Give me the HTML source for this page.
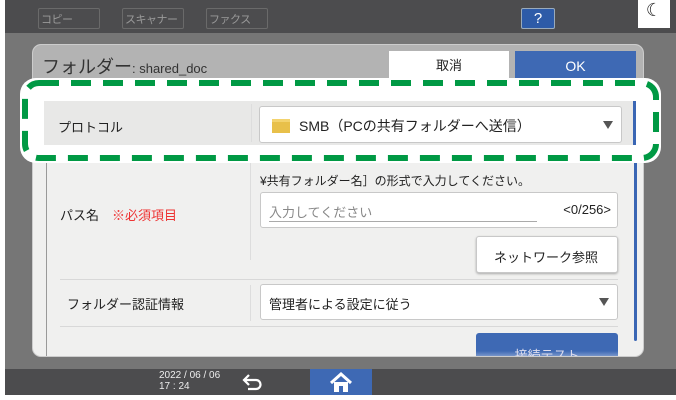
<!DOCTYPE html><html><head><meta charset="utf-8"><style>
*{box-sizing:border-box;margin:0;padding:0}
body{width:676px;height:400px;background:#fff;position:relative;overflow:hidden;font-family:"Liberation Sans","Noto Sans CJK JP",sans-serif;}
.a{position:absolute}
.tab{position:absolute;top:8px;height:21px;width:62px;border:1px solid #6a6a6a;border-radius:2px;background:#4c4c4e;color:#9a9a9a;font-size:11px;padding:2px 2px;white-space:nowrap;overflow:hidden;letter-spacing:-0.5px}
.dd{position:absolute;background:#fff;border:1px solid #c8c8c8;border-radius:3px;font-size:13px;color:#222}
.arr{position:absolute;right:8px;top:50%;margin-top:-4px;width:0;height:0;border-left:5px solid transparent;border-right:5px solid transparent;border-top:8px solid #555}
</style></head><body>
<div class="a" style="left:5px;top:0;width:671px;height:33px;background:#4c4c4e"></div>
<div class="tab" style="left:38px">コピー</div>
<div class="tab" style="left:122px">スキャナー</div>
<div class="tab" style="left:206px">ファクス</div>
<div class="a" style="left:521px;top:8px;width:34px;height:21px;background:#2d5ba8;border:1px solid #9ab;border-radius:2px;color:#fff;text-align:center;font-size:15px;line-height:19px">?</div>
<div class="a" style="left:638px;top:0;width:32px;height:28px;background:#fff;font-size:18px;text-align:center;color:#222">☾</div>
<div class="a" style="left:5px;top:33px;width:671px;height:336px;background:#767676"></div>
<div class="a" style="left:32px;top:44px;width:612px;height:313px;background:#f0f0ef;border:1px solid #ccc;border-radius:9px;overflow:hidden">
 <div class="a" style="left:0;top:0;width:612px;height:36px;background:#b3b3b3"></div>
 <div class="a" style="left:9px;top:8px;font-size:18px;color:#333">フォルダー<span style="font-size:13px">: shared_doc</span></div>
 <div class="a" style="left:356px;top:6px;width:120px;height:30px;background:#fff;font-size:13px;text-align:center;line-height:30px;color:#222">取消</div>
 <div class="a" style="left:482px;top:6px;width:121px;height:30px;background:#3e69b4;font-size:14px;text-align:center;line-height:30px;color:#fff">OK</div>
 <div class="a" style="left:13px;top:40px;width:1px;height:273px;background:#999"></div>
 <div class="a" style="left:601px;top:56px;width:3px;height:240px;background:#3a66b4;border-radius:2px"></div>
 <div class="a" style="left:217px;top:115px;width:1px;height:100px;background:#ddd"></div>
 <div class="a" style="left:227px;top:127px;font-size:12px;color:#222">¥共有フォルダー名］の形式で入力してください。</div>
 <div class="a" style="left:27px;top:160px;font-size:13px;color:#222">パス名　<span style="color:#e33">※必須項目</span></div>
 <div class="dd" style="left:227px;top:147px;width:358px;height:36px"><span class="a" style="left:8px;top:9px;color:#888;font-size:13px">入力してください</span><span class="a" style="right:6px;top:9px;font-size:13px">&lt;0/256&gt;</span><div class="a" style="left:8px;top:28px;width:268px;height:1px;background:#aaa"></div></div>
 <div class="dd" style="left:443px;top:191px;width:142px;height:37px;box-shadow:0 1px 2px #aaa"><span class="a" style="left:17px;top:10px;font-size:13px">ネットワーク参照</span></div>
 <div class="a" style="left:27px;top:234px;width:558px;height:1px;background:#d8d8d8"></div>
 <div class="a" style="left:217px;top:240px;width:1px;height:36px;background:#ddd"></div>
 <div class="a" style="left:34px;top:249px;font-size:13px;color:#222">フォルダー認証情報</div>
 <div class="dd" style="left:227px;top:239px;width:358px;height:36px"><span class="a" style="left:8px;top:9px;font-size:13px">管理者による設定に従う</span><div class="arr"></div></div>
 <div class="a" style="left:27px;top:281px;width:558px;height:1px;background:#d8d8d8"></div>
 <div class="a" style="left:443px;top:288px;width:142px;height:30px;background:linear-gradient(#3e69b4 60%,#c8d4ea);border-radius:3px;color:#dde;font-size:13px;text-align:center;padding-top:12px">接続テスト</div>
</div>
<div class="a" style="left:20px;top:78px;width:641px;height:85px;background:#fff;border-radius:16px"></div>
<svg class="a" style="left:20px;top:78px" width="641" height="85"><rect x="5" y="5" width="631" height="75" rx="14" fill="none" stroke="#009944" stroke-width="6" stroke-dasharray="20 12"/></svg>
<div class="a" style="left:44px;top:101px;width:589px;height:44px;background:#e8e8e7"></div>
<div class="a" style="left:633px;top:101px;width:3px;height:44px;background:#3a66b4"></div>
<div class="a" style="left:251px;top:104px;width:1px;height:38px;background:#ddd"></div>
<div class="a" style="left:58px;top:117px;font-size:13px;color:#222">プロトコル</div>
<div class="dd" style="left:259px;top:106px;width:363px;height:37px"><div class="a" style="left:12px;top:12px;width:18px;height:14px;background:#e8c04a;border-top:3px solid #f3d36e"></div><span class="a" style="left:39px;top:9px;font-size:14px">SMB（PCの共有フォルダーへ送信）</span><div class="arr"></div></div>
<div class="a" style="left:5px;top:369px;width:671px;height:26px;background:#4c4c4e"></div>
<div class="a" style="left:159px;top:370px;font-size:10px;color:#eee;line-height:11px">2022 / 06 / 06<br>17 : 24</div>
<svg class="a" style="left:242px;top:373px" width="22" height="18"><path d="M7 2 L2 7 L7 12 M2 7 H14 A4.5 4.5 0 0 1 14 16 H6" fill="none" stroke="#fff" stroke-width="2.2"/></svg>
<div class="a" style="left:310px;top:369px;width:62px;height:26px;background:#3e69b4"></div>
<svg class="a" style="left:329px;top:372px" width="24" height="21"><path d="M2 11 L12 2 L22 11" fill="none" stroke="#fff" stroke-width="3"/><path d="M5 10 V20 H10 V14 H14 V20 H19 V10" fill="#fff"/></svg>
</body></html>
